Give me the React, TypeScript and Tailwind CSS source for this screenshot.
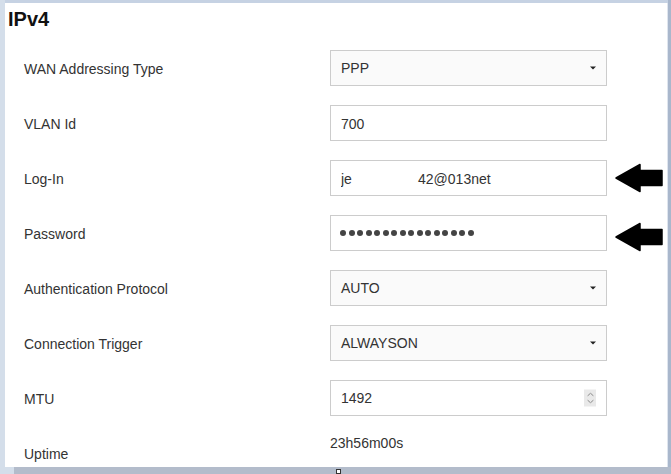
import type { ReactNode } from 'react'

function Caret() {
  return (
    <svg className="absolute right-[10px] top-1/2 -translate-y-1/2" width="6" height="4" viewBox="0 0 6 4">
      <path d="M0 0.5h6L3 3.5z" fill="#222" />
    </svg>
  )
}

function Select({ value }: { value: string }) {
  return (
    <div className="relative w-[277px] h-9 border border-[#cccccc] bg-[#fafafa] flex items-center pl-[10px] pt-[2px] text-[14px] text-[#333]">
      {value}
      <Caret />
    </div>
  )
}

function TextBox({ value }: { value: string }) {
  return (
    <input
      readOnly
      type="text"
      value={value}
      className="w-[277px] h-9 border border-[#cccccc] bg-white pl-[10px] pt-[2px] text-[14px] text-[#333] outline-none"
      style={{ fontFamily: '"Liberation Sans", Arial, sans-serif' }}
    />
  )
}

function PasswordBox({ length }: { length: number }) {
  return (
    <div className="w-[277px] h-9 border border-[#cccccc] bg-white pl-[9px] pt-[1px] flex items-center gap-[2.5px]">
      {Array.from({ length }, (_, i) => (
        <span key={i} className="w-[6px] h-[6px] rounded-full bg-[#444]" />
      ))}
    </div>
  )
}

function NumberBox({ value }: { value: string }) {
  return (
    <div className="relative w-[277px] h-9 border border-[#cccccc] bg-white flex items-center pl-[10px] pt-[2px] text-[14px] text-[#333]">
      {value}
      <div className="absolute right-[10px] top-1/2 -translate-y-1/2 w-[12px] h-[17px] bg-[#e9e9e9] flex flex-col items-center justify-center gap-[3px]">
        <svg width="7" height="4" viewBox="0 0 7 4">
          <path d="M0.5 3.5L3.5 0.7L6.5 3.5" fill="none" stroke="#8a8a8a" strokeWidth="1" />
        </svg>
        <svg width="7" height="4" viewBox="0 0 7 4">
          <path d="M0.5 0.5L3.5 3.3L6.5 0.5" fill="none" stroke="#8a8a8a" strokeWidth="1" />
        </svg>
      </div>
    </div>
  )
}

function Arrow({ low }: { low?: boolean }) {
  return (
    <svg
      className={`absolute left-[284px] top-1/2 ${low ? '-translate-y-[11px]' : '-translate-y-1/2'}`}
      width="50"
      height="30"
      viewBox="0 0 50 30"
    >
      <path
        d="M2 15L26 1.5V7.5H48V22.5H26V28.5Z"
        fill="#000"
        stroke="#000"
        strokeWidth="1.5"
        strokeLinejoin="round"
      />
    </svg>
  )
}

function Row({ label, children, arrow }: { label: string; children: ReactNode; arrow?: 'high' | 'low' }) {
  return (
    <div className="relative h-[55px] flex items-center">
      <div className="w-[306px] mt-[4px] text-[14px] text-[#333]">{label}</div>
      <div className="relative">
        {children}
        {arrow && <Arrow low={arrow === 'low'} />}
      </div>
    </div>
  )
}

export default function App() {
  return (
    <div
      className="relative w-[671px] h-[474px] overflow-hidden bg-[#b3bccb]"
      style={{ fontFamily: '"Liberation Sans", Arial, sans-serif' }}
    >
      <div className="flex h-[467px] bg-[#c8d4e4]">
        <div className="w-[5px] bg-[#d4deea]" />
        <div className="flex-1 flex flex-col">
          <div className="h-[3px] bg-[#c6d2e3]" />
          <div className="flex-1 bg-white overflow-hidden border-r border-r-[#dfe5ee]">
            <div className="mt-[4px] pl-[3px] h-[24px] leading-[24px] text-[20px] font-bold text-[#111]">IPv4</div>
            <div className="mt-[9px] pl-[19px] flex flex-col">
              <Row label="WAN Addressing Type">
                <Select value="PPP" />
              </Row>
              <Row label="VLAN Id">
                <TextBox value="700" />
              </Row>
              <Row label="Log-In" arrow="high">
                <TextBox value={'je                 42@013net'} />
              </Row>
              <Row label="Password" arrow="low">
                <PasswordBox length={16} />
              </Row>
              <Row label="Authentication Protocol">
                <Select value="AUTO" />
              </Row>
              <Row label="Connection Trigger">
                <Select value="ALWAYSON" />
              </Row>
              <Row label="MTU">
                <NumberBox value="1492" />
              </Row>
              <div className="h-[55px] flex items-start text-[14px] text-[#333]">
                <div className="w-[306px] pt-[19px] leading-5">Uptime</div>
                <div className="pt-[8px] leading-5">23h56m00s</div>
              </div>
            </div>
          </div>
        </div>
        <div className="w-[3px] bg-[#a9b7cc]" />
      </div>
      <div className="absolute left-0 bottom-0 w-[14px] h-[7px] bg-[#d4deea]" />
      <div className="absolute left-[336px] bottom-0 w-[5px] h-[5px] bg-white border border-[#333]" />
    </div>
  )
}
